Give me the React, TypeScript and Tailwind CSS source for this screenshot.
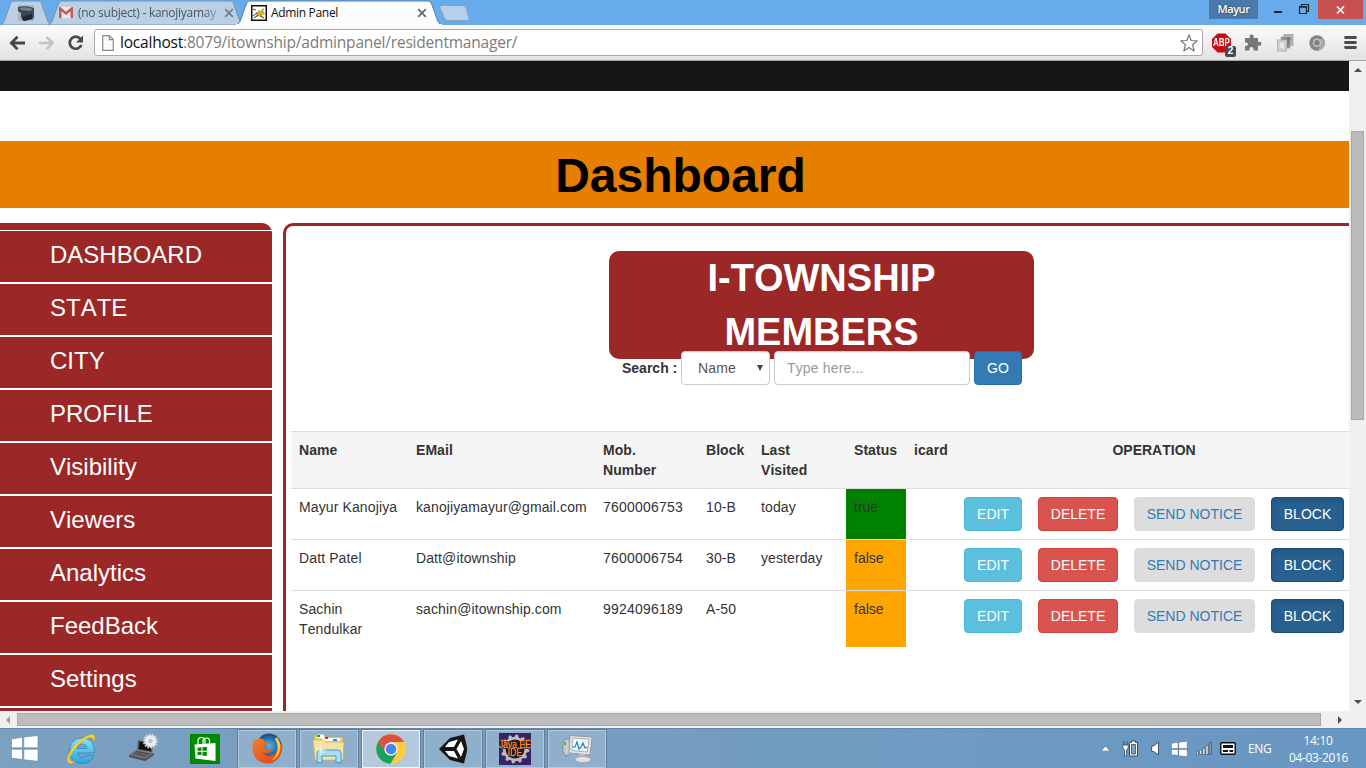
import type { ReactNode } from "react";

const UI = "font-['Open_Sans','Noto_Sans',sans-serif]";

function Tab({ width, active, children, className }: { width: number; active?: boolean; children: ReactNode; className: string }) {
  const w = width;
  return (
    <div className={`relative flex h-[25px] shrink-0 items-center ${className}`}>
      <svg className="absolute inset-0" width={w} height="25" viewBox={`0 0 ${w} 25`}>
        <path
          d={`M0 25 C3 24 4 22 5 19 L10 5 C11 2 12 1 14 1 L${w - 14} 1 C${w - 12} 1 ${w - 11} 2 ${w - 10} 5 L${w - 5} 19 C${w - 4} 22 ${w - 3} 24 ${w} 25 Z`}
          fill={active ? "#fcfcfc" : "#bbd0e5"}
          stroke={active ? "#5b7fa3" : "#7195b8"}
          strokeWidth="1"
        />
        {active && <path d={`M0 25 H${w}`} stroke="#fcfcfc" strokeWidth="2" />}
      </svg>
      {children}
    </div>
  );
}

function CloseX({ color }: { color: string }) {
  return (
    <svg className="relative" width="10" height="10" viewBox="0 0 10 10">
      <path d="M1.2 1.2 L8.8 8.8 M8.8 1.2 L1.2 8.8" stroke={color} strokeWidth="1.7" />
    </svg>
  );
}

function TabStrip() {
  return (
    <div className="flex h-[25px] bg-[#67abeb]">
      <Tab width={52} className="w-[52px]">
        <svg className="relative ml-[18px]" width="16" height="16" viewBox="0 0 16 16">
          <rect width="16" height="16" fill="#a9b8c4" />
          <path d="M0 2 Q8 0 16 3 V12 L15 14 L5 16 L3 12 V8 L0 6Z" fill="#3b4852" />
          <path d="M1 3 Q8 1 15 4 L12 6 L3 5Z" fill="#6d8597" />
          <path d="M4 12 L14 9 V14 L6 16Z" fill="#20272d" />
        </svg>
      </Tab>
      <Tab width={196} className="-ml-1 w-[196px]">
        <svg className="relative ml-[11px] shrink-0" width="14" height="11" viewBox="0 0 14 11">
          <path d="M0 0 H14 V11 H0Z" fill="#e3e9ee" />
          <path d="M1.2 11 V1.5 L7 6.4 L12.8 1.5 V11" fill="none" stroke="#cf5550" strokeWidth="2.4" />
        </svg>
        <span className={`${UI} relative ml-[5px] w-[142px] bg-gradient-to-r from-[#44505c] from-88% to-[#a5b9cc] bg-clip-text text-[12px] tracking-[-0.28px] whitespace-nowrap text-transparent`}>
          (no subject) - kanojiyamay
        </span>
        <span className="ml-[4px]"><CloseX color="#6e7f8e" /></span>
      </Tab>
      <Tab width={206} active className="-ml-2 w-[206px]">
        <svg className="relative ml-[15px] shrink-0" width="16" height="16" viewBox="0 0 16 16">
          <rect x=".75" y=".75" width="14.500" height="14.500" fill="#fff" stroke="#111" strokeWidth="1.500" />
          <path d="M4 8 L6 7 L8 5 L9 6 L13 2.500 L12.500 6 L14 9 L11 10 L13 13 L9 11 L3 13 L6 10Z" fill="#d5a43a" />
          <path d="M2 11 L6 8 M2 4 L5 5 M9 11 L13 13 M3 13 L7 10" stroke="#4b4434" strokeWidth="1" />
        </svg>
        <span className={`${UI} relative ml-[4px] w-[146px] text-[12px] tracking-[-0.32px] whitespace-nowrap text-[#111]`}>Admin Panel</span>
        <CloseX color="#666" />
      </Tab>
      <svg className="-ml-[5px]" width="34" height="25" viewBox="0 0 34 25">
        <path d="M4 5.5 H26 Q28 5.5 29 8 L32 18 Q32.500 20.500 30 20.500 H11 Q8.500 20.500 7.500 18 L3 8 Q2 5.500 4 5.500Z" fill="#b7d0ea" stroke="#80a5c8" />
      </svg>
      <div className="ml-auto flex items-start">
        <div className={`${UI} flex h-[19px] w-[49px] items-center justify-center bg-[#4a7aab] text-[11px] font-semibold tracking-[-0.4px] text-white [text-shadow:0_0_2px_#333]`}>Mayur</div>
        <svg width="60" height="19" viewBox="0 0 60 19">
          <path d="M16 12 H24" stroke="#1b2733" strokeWidth="2" />
          <path d="M41.500 6.500 H48.500 V13.500 H41.500Z M43.500 6 V4.500 H50.500 V11.500 H49" fill="none" stroke="#1b2733" strokeWidth="1.200" />
          <path d="M41 7 H49" stroke="#1b2733" strokeWidth="1.500" />
        </svg>
        <div className="mr-[3px] flex h-[19px] w-[45px] items-center justify-center bg-[#c75050]">
          <svg width="9" height="8" viewBox="0 0 9 8"><path d="M1 .5 L8 7.500 M8 .5 L1 7.500" stroke="#fff" strokeWidth="1.700" /></svg>
        </div>
      </div>
    </div>
  );
}

function Toolbar() {
  return (
    <div className="flex h-[36px] items-center border-b border-[#a5a5a5] bg-gradient-to-b from-[#fcfcfc] to-[#e2e2e2]">
      <svg className="ml-[9px] shrink-0" width="76" height="18" viewBox="0 0 76 18">
        <path d="M16 9 H3 M8.500 2.800 L2.300 9 L8.500 15.200" fill="none" stroke="#484848" strokeWidth="2.800" />
        <path d="M30 9 H43 M37.500 2.800 L43.700 9 L37.500 15.200" fill="none" stroke="#c3c3c3" strokeWidth="2.600" />
        <path d="M71.300 4.800 A6 6 0 1 0 72.300 11" fill="none" stroke="#484848" strokeWidth="2.700" />
        <path d="M74 1.500 V8.500 H67Z" fill="#484848" />
      </svg>
      <div className="ml-[9px] flex h-[27px] w-[1109px] shrink-0 items-center rounded-[3px] border border-[#a9a9a9] bg-white">
        <svg className="ml-[7px]" width="12" height="16" viewBox="0 0 12 16">
          <path d="M.7 .7 H7.500 L11.300 4.500 V15.300 H.7Z M7.300 .7 V4.700 H11.300" fill="#fafafa" stroke="#8a8a8a" strokeWidth="1.200" />
        </svg>
        <span className={`${UI} ml-[6px] text-[15.500px] tracking-[-0.205px] whitespace-nowrap text-[#7c7c7c]`}>
          <span className="text-[#111]">localhost</span>:8079/itownship/adminpanel/residentmanager/
        </span>
        <svg className="mr-[4px] ml-auto" width="18" height="18" viewBox="0 0 18 18">
          <path d="M9 .9 L11.200 6.500 L17.200 6.900 L12.600 10.700 L14.100 16.900 L9 13.500 L3.900 16.900 L5.400 10.700 L.8 6.900 L6.800 6.500Z" fill="#fff" stroke="#777" strokeWidth="1.200" strokeLinejoin="round" />
        </svg>
      </div>
      <div className="relative ml-[8px] h-[26px] w-[26px] shrink-0">
        <svg width="26" height="26" viewBox="0 0 26 26">
          <path d="M6.600 3.500 H14.400 L20 9.100 V16.900 L14.400 22.500 H6.600 L1 16.900 V9.100Z" fill="#c70d12" />
        </svg>
        <span className="absolute top-[8px] left-[2px] origin-left scale-x-[0.8] font-['Liberation_Sans',sans-serif] text-[10px] leading-[10px] font-bold text-white">ABP</span>
        <span className="absolute top-[16px] left-[14px] flex h-[11px] w-[11px] items-center justify-center rounded-[2px] bg-[#4a4a4a] font-['Liberation_Sans',sans-serif] text-[10px] leading-none font-bold text-white">2</span>
      </div>
      <svg className="ml-[7px] shrink-0" width="18" height="18" viewBox="0 0 18 18">
        <path d="M1 4 H6 Q4.500 .5 7.500 .5 Q10.500 .5 9.500 4 H14 V8 Q17.500 7 17.500 9.800 Q17.500 12.500 14 11.500 V16.500 H9.500 Q10 13 7.500 13 Q5 13 5.500 16.500 H1 V12 Q4 12 4 10 Q4 8 1 8.500Z" fill="#777" />
      </svg>
      <svg className="ml-[14px] shrink-0" width="18" height="18" viewBox="0 0 18 18">
        <rect x="8" y=".5" width="9" height="11" fill="#b0b0b0" stroke="#999" strokeWidth=".6" />
        <rect x="5" y="3" width="9" height="11" fill="#868686" stroke="#ababab" strokeWidth=".8" />
        <rect x="1.500" y="6" width="9" height="11" fill="#d0d0d0" stroke="#b2b2b2" />
        <path d="M4 9 H8 V14 H4Z" fill="#e6e6e6" /><path d="M11 5 H15 M13 3 V9" stroke="#777" strokeWidth="1.500" />
      </svg>
      <svg className="ml-[15px] shrink-0" width="16" height="16" viewBox="0 0 16 16">
        <circle cx="8" cy="8" r="7.700" fill="#858585" />
        <path d="M8 4 H15 A7.700 7.700 0 0 1 9 15.500 L11.500 10Z" fill="#a9a9a9" />
        <circle cx="8" cy="7.800" r="4.300" fill="#c5c5c5" /><circle cx="8" cy="7.800" r="2.700" fill="#808080" />
      </svg>
      <svg className="ml-[19px] shrink-0" width="13" height="13" viewBox="0 0 13 13">
        <path d="M1.500 1.500 H11.500 M1.500 6.500 H11.500 M1.500 11.500 H11.500" stroke="#4d4d4d" strokeWidth="2.800" strokeLinecap="round" />
      </svg>
    </div>
  );
}

const MENU = ["DASHBOARD", "STATE", "CITY", "PROFILE", "Visibility", "Viewers", "Analytics", "FeedBack", "Settings"];

type Member = { name: string; email: string; mobile: string; block: string; visited: string; status: boolean };

const MEMBERS: Member[] = [
  { name: "Mayur Kanojiya", email: "kanojiyamayur@gmail.com", mobile: "7600006753", block: "10-B", visited: "today", status: true },
  { name: "Datt Patel", email: "Datt@itownship", mobile: "7600006754", block: "30-B", visited: "yesterday", status: false },
  { name: "Sachin Tendulkar", email: "sachin@itownship.com", mobile: "9924096189", block: "A-50", visited: "", status: false },
];

const BTN = "h-[34px] w-full rounded-[4px] border text-[14px] leading-[20px] whitespace-nowrap";

function MembersTable() {
  return (
    <table className="mt-[46px] ml-[5px] w-[1061px] shrink-0 table-fixed border-collapse text-left text-[14px] leading-[20px] text-[#333]">
      <colgroup>
        <col className="w-[117px]" /><col className="w-[187px]" /><col className="w-[103px]" /><col className="w-[55px]" />
        <col className="w-[93px]" /><col className="w-[60px]" /><col className="w-[50px]" /><col className="w-[74px]" />
        <col className="w-[96px]" /><col className="w-[137px]" /><col className="w-[89px]" />
      </colgroup>
      <thead>
        <tr className="h-[57px] bg-[#f5f5f5] align-top tracking-[0.06px] shadow-[inset_0_1px_0_#ddd] [&>th]:p-2 [&>th]:pt-[9px] [&>th]:font-bold">
          <th>Name</th><th>EMail</th><th>Mob.<br />Number</th><th className="whitespace-nowrap">Block</th><th>Last<br />Visited</th>
          <th className="whitespace-nowrap">Status</th><th>icard</th><th colSpan={4} className="text-center tracking-normal">OPERATION</th>
        </tr>
      </thead>
      <tbody>
        {MEMBERS.map((m) => (
          <tr key={m.email} className="h-[51px] align-top shadow-[inset_0_1px_0_#ddd] [&>td]:p-2 [&>td]:pt-[9px]">
            <td className="tracking-[0.120px]">{m.name}</td>
            <td className="tracking-[0.110px]">{m.email}</td>
            <td className="tracking-[0.210px]">{m.mobile}</td>
            <td className="tracking-[0.120px]">{m.block}</td>
            <td className="tracking-[0.100px]">{m.visited}</td>
            <td className={m.status ? "bg-[#008000] bg-clip-content !p-0 !pt-px" : "bg-[#ffa500] bg-clip-content !p-0 !pt-px"}>
              <div className="p-2">{String(m.status)}</div>
            </td>
            <td />
            <td><button className={`${BTN} border-[#46b8da] bg-[#5bc0de] text-white`}>EDIT</button></td>
            <td><button className={`${BTN} border-[#d43f3a] bg-[#d9534f] text-white`}>DELETE</button></td>
            <td><button className={`${BTN} border-[#ddd] bg-[#ddd] text-[#337ab7]`}>SEND NOTICE</button></td>
            <td><button className={`${BTN} border-[#204d74] bg-[#286090] text-white shadow-[inset_0_3px_5px_rgba(0,0,0,0.125)]`}>BLOCK</button></td>
          </tr>
        ))}
      </tbody>
    </table>
  );
}

function Page() {
  return (
    <div className="flex h-[650px] w-[1349px] flex-col overflow-hidden bg-white font-['Liberation_Sans',Arial,sans-serif] [font-kerning:none]">
      <div className="h-[30px] shrink-0 bg-[#161616]" />
      <h1 className="mt-[50px] h-[67px] w-[1349px] shrink-0 bg-[#e67e00] pl-[12px] text-center text-[48px] leading-[70px] font-bold text-black">Dashboard</h1>
      <div className="mt-[15px] flex h-[488px] shrink-0">
        <nav className="w-[272px] shrink-0 overflow-hidden rounded-tr-[10px] bg-[#9b2727] pt-[7px] text-[24px] text-white">
          <ul className="border-t border-white">
            {MENU.map((m) => (
              <li key={m} className="h-[53px] border-b-2 border-white pl-[50px] leading-[48px]">{m}</li>
            ))}
          </ul>
        </nav>
        <main className="-mr-4 ml-[11px] flex w-[1082px] shrink-0 flex-col rounded-tl-[10px] border-t-[3px] border-l-[3px] border-[#9b2727]">
          <h2 className="mt-[25px] ml-[323px] h-[108px] w-[425px] shrink-0 rounded-[10px] bg-[#9b2727] px-8 text-center text-[38px] leading-[54px] font-bold text-white">
            I-TOWNSHIP<br />MEMBERS
          </h2>
          <form className="-mt-[8px] ml-[336px] flex h-[34px] shrink-0 items-center text-[14px]">
            <label className="w-[59px] text-[14px] leading-[32px] font-bold whitespace-nowrap text-[#333]">Search :</label>
            <div className="flex h-[34px] w-[89px] items-center justify-between rounded-[4px] border border-[#ccc] bg-white pr-[6px] pl-[16px] text-[#555] shadow-[inset_0_1px_1px_rgba(0,0,0,0.075)]">
              <span className="tracking-[0.15px]">Name</span>
              <svg width="6" height="6" viewBox="0 0 6 6"><path d="M0 0 H6 L3 6Z" fill="#444" /></svg>
            </div>
            <input placeholder="Type here..." className="ml-[4px] h-[34px] w-[196px] rounded-[4px] border border-[#ccc] bg-white px-[12px] text-[14px] tracking-[0.15px] shadow-[inset_0_1px_1px_rgba(0,0,0,0.075)] placeholder:text-[#999]" />
            <button type="button" className="ml-[4px] h-[34px] w-[48px] rounded-[4px] border border-[#2e6da4] bg-[#337ab7] text-[14px] text-white">GO</button>
          </form>
          <MembersTable />
        </main>
      </div>
    </div>
  );
}

function VScroll() {
  return (
    <div className="flex h-[650px] w-[17px] flex-col items-center bg-[#f0f0f0]">
      <svg className="mt-[7px]" width="8" height="4" viewBox="0 0 8 4"><path d="M0 4 L4 0 L8 4Z" fill="#505050" /></svg>
      <div className="mt-[59px] h-[289px] w-[13px] border border-[#a8a8a8] bg-[#bcbcbc]" />
      <svg className="mt-auto mb-[7px]" width="8" height="4" viewBox="0 0 8 4"><path d="M0 0 L4 4 L8 0Z" fill="#505050" /></svg>
    </div>
  );
}

function HScroll() {
  return (
    <div className="flex h-[17px] items-center bg-[#f0f0f0]">
      <svg className="ml-[6px]" width="4" height="8" viewBox="0 0 4 8"><path d="M4 0 L0 4 L4 8Z" fill="#a0a0a0" /></svg>
      <div className="ml-[7px] h-[13px] w-[1304px] border border-[#a8a8a8] bg-[#bcbcbc]" />
      <svg className="ml-[17px]" width="4" height="8" viewBox="0 0 4 8"><path d="M0 0 L4 4 L0 8Z" fill="#505050" /></svg>
    </div>
  );
}

function Slot({ children, active }: { children: ReactNode; active?: boolean }) {
  return (
    <div className={`flex h-[40px] w-[60px] items-center justify-center border outline outline-[#5d7f9f] -outline-offset-1 ${active ? "border-[#5d7f9f] bg-[#b5c9dc] shadow-[inset_0_0_0_1px_#f4f8fc]" : "border-[#5d7f9f] bg-[#8fafcb] shadow-[inset_0_0_0_1px_#b3c9dc]"}`}>
      {children}
    </div>
  );
}

function WinLogo({ w, h, stroke }: { w: number; h: number; stroke?: string }) {
  return (
    <svg width={w} height={h} viewBox="0 0 28 27">
      <path d="M.5 4 L11.500 2.200 V12.800 H.5Z M12.800 2 L27 .5 V12.800 H12.800Z M.5 14.200 H11.500 V24.600 L.5 23Z M12.800 14.200 H27 V26.300 L12.800 24.800Z" fill="#fff" stroke={stroke ?? "#6185a8"} strokeWidth=".6" />
    </svg>
  );
}

function gearPath(cx: number, cy: number, r1: number, r2: number, n: number) {
  const pts: string[] = [];
  for (let i = 0; i < n * 4; i++) {
    const a = ((i + 0.5) / (n * 4)) * Math.PI * 2;
    const r = i % 4 < 2 ? r2 : r1;
    pts.push(`${(cx + r * Math.cos(a)).toFixed(2)} ${(cy + r * Math.sin(a)).toFixed(2)}`);
  }
  return `M${pts.join("L")}Z`;
}

function Taskbar() {
  return (
    <div className="flex h-[40px] items-center border-t border-[#6487a9] bg-[linear-gradient(90deg,#7ba0c0,#759dc0_45%,#6897c3)]">
      <div className="ml-[11px] w-[28px]"><WinLogo w={28} h={27} /></div>
      <svg className="ml-[26px]" width="32" height="32" viewBox="0 0 32 32">
        <defs><linearGradient id="ie" x1="0" y1="0" x2="0" y2="1"><stop offset="0" stopColor="#8be2fa" /><stop offset="1" stopColor="#28a4dc" /></linearGradient></defs>
        <path d="M29.500 20 H12.500 Q13 24.500 17.500 24.500 Q20.500 24.500 22 22.500 H29 Q26 30.500 17 30.500 Q5 30 4.500 18 Q5 5.500 17 5 Q30 5.500 29.500 20Z M12.500 15.500 H22 Q21.500 11 17.200 11 Q13 11 12.500 15.500Z" fill="url(#ie)" fillRule="evenodd" stroke="#2583b5" strokeWidth=".7" />
        <path d="M5 30.500 C-1 29 4 18 12 10 C19 3 28 -.5 29.500 3 C30.300 5 29 8 28.500 9 C29 4 26 3 20 6.500 C11 12 2 25 5.500 28 C7 29 9.500 28 10 27.700 C8.500 29.500 6.500 30.800 5 30.500Z" fill="#fcd52d" stroke="#dba514" strokeWidth=".5" />
      </svg>
      <svg className="ml-[30px]" width="32" height="32" viewBox="0 0 32 32">
        <path d="M11 7 L25 9 L25.500 20 L10 17Z" fill="#4a4f52" stroke="#8b9094" strokeWidth=".7" /><path d="M12.500 9 L23.500 10.500 L24 18 L12 16Z" fill="#111" />
        <path d="M9 17 L26 20 L18 26 L2 22Z" fill="#6a6a6a" stroke="#858585" strokeWidth=".7" /><path d="M9 18.500 L23 21.300 M7 20 L19 23" stroke="#444" strokeWidth="1" />
        <path d="M2 22 L18 26 V28 L2 24Z M18 26 L27 20 V22 L18 28Z" fill="#4a4a4a" />
        <path d={gearPath(23.500, 8, 5.800, 7.600, 14)} fill="#e9edf0" stroke="#a7b0b8" strokeWidth=".6" /><circle cx="23.500" cy="8" r="2.200" fill="#b9c2ca" />
      </svg>
      <svg className="ml-[31px]" width="30" height="30" viewBox="0 0 30 30">
        <rect width="30" height="30" fill="#008a00" />
        <path d="M4.500 10.500 L25.500 9 V27 L5.500 24.500Z" fill="#fff" /><path d="M8 11 V7 Q8 3.500 11.500 3.500 Q14.500 3.500 15 6 V10 M13 10 V6.500 Q14 4 17 4 Q19.500 4 19.500 7 V10" fill="none" stroke="#fff" strokeWidth="1.200" />
        <path d="M7.500 13.800 L11.500 13.300 V16.800 H7.500Z M12.500 13.200 L16.800 12.700 V16.800 H12.500Z M7.500 17.800 H11.500 V21.300 L7.500 20.800Z M12.500 17.800 H16.800 V22 L12.500 21.500Z" fill="#008a00" />
      </svg>
      <div className="ml-[17px] flex gap-[2px]">
        <Slot>
          <svg width="31" height="31" viewBox="0 0 31 31">
            <defs><radialGradient id="ffb"><stop offset="0" stopColor="#4db8e8" /><stop offset="1" stopColor="#124a8c" /></radialGradient>
              <linearGradient id="fff" x1="0" y1="0" x2="1" y2="1"><stop offset="0" stopColor="#f4802b" /><stop offset="1" stopColor="#df3f16" /></linearGradient></defs>
            <circle cx="17" cy="13" r="12.500" fill="url(#ffb)" />
            <path d="M2 5 C2 7 3 8 3 8 C5 5 9 5 11 6 C11 8 14 9 16 9 C16 12 12 12 12 14 C12 17 17 17 20 15 C19 20 14 22 11 19 C12 24 22 25 25 17 C26 13 25 9 23 6 C28 8 29 12 29 12 L30 9 C32 20 26 30.500 15 30.500 C6 30 0 23 .5 15 C.5 11 1 8 2 5Z" fill="url(#fff)" />
            <path d="M25 4 C31 12 29 24 19 28 C26 22 28 14 23 6Z" fill="#ffc83d" />
          </svg>
        </Slot>
        <Slot>
          <svg width="34" height="31" viewBox="0 0 34 31">
            <path d="M2 2 H12 L14 4 H31 V10 H2Z" fill="#e9cf79" stroke="#c2a145" strokeWidth=".7" />
            <path d="M5 1.500 H12 V5 H5Z" fill="#fff" /><rect x="5" y="2" width="3" height="2" fill="#1fa827" />
            <path d="M10 5 H28 V8 H10Z" fill="#fff" /><rect x="13" y="4" width="3" height="2" fill="#d22b2b" /><rect x="21" y="6" width="4" height="2" fill="#2a8fd8" />
            <path d="M1 7 H12 L14 9 H32 L31 27 H3Z" fill="#f5e3a0" stroke="#cdae55" strokeWidth=".7" />
            <path d="M5 29.500 V20 Q5 17 8 17 H26 Q29 17 29 20 V29.500 H24 V23 H10 V29.500Z" fill="#a8ddf4" stroke="#4798cf" />
            <path d="M9 12 V22 M4 17 H14 M6 14 L12 20" stroke="#fff" strokeWidth=".8" />
          </svg>
        </Slot>
        <Slot active>
          <svg width="30" height="30" viewBox="0 0 30 30">
            <circle cx="15" cy="15" r="14.800" fill="#ffcd40" />
            <path d="M2.200 7.600 A14.800 14.800 0 0 0 14.500 29.800 L21.200 18.500 L15 15 H8Z" fill="#1aa05f" />
            <path d="M2.200 7.600 A14.800 14.800 0 0 1 28 8 H15 L9 18Z" fill="#dd5144" />
            <circle cx="15" cy="15" r="6.700" fill="#f3f3f3" /><circle cx="15" cy="15" r="5.300" fill="#4587f3" />
          </svg>
        </Slot>
        <Slot>
          <svg width="30" height="30" viewBox="0 0 30 30">
            <path d="M1 15 L12 4 L26 .5 L29 13 V17 L26 29.500 L12 26 Z" fill="#151515" />
            <path d="M11 8 L20 5.500 L16 13 H7Z M7 17 H16 L20 24.500 L11 22Z M23 7 L26 15 L23 23 L18.500 15Z" fill="#fff" />
          </svg>
        </Slot>
        <Slot>
          <div className="relative h-[32px] w-[32px] bg-[#3a2064]">
            <svg width="32" height="32" viewBox="0 0 32 32">
              <path d={gearPath(16, 16, 12, 14.500, 12)} fill="#b9bcbd" /><circle cx="16" cy="16" r="9.500" fill="#201a28" />
              <path d="M1 8 H31 V16 H23 V24 H9 V16 H1Z" fill="#201a28" opacity=".75" />
            </svg>
            <span className="absolute top-[7px] -left-[4px] w-[40px] scale-x-[0.82] text-center font-['Liberation_Sans',sans-serif] text-[10.500px] leading-[8px] whitespace-nowrap text-[#ff8a1f] [-webkit-text-stroke:0.3px_#ff8a1f]">Java EE<br />IDE</span>
          </div>
        </Slot>
        <Slot>
          <svg width="32" height="30" viewBox="0 0 32 30">
            <path d="M2 7 L8 4 L9 20 L5 22 L2 18Z" fill="#c9cdd0" stroke="#777" strokeWidth=".7" /><rect x="3" y="8" width="2" height="3" fill="#31c531" />
            <path d="M9 1.500 L31 3 L29 21 L8 19Z" fill="#e3e6e8" stroke="#999" /><path d="M11.500 4 L28 5 L26.500 18 L11 16.500Z" fill="#edf7fc" stroke="#a3b2bc" />
            <path d="M11.500 13 L14 13 L16 8 L18 15 L20 13 L22 9 L24 14 L26.500 13" fill="none" stroke="#2582b7" strokeWidth="1.200" />
            <path d="M18 20 H24 V25 H18Z" fill="#bbb" /><ellipse cx="22" cy="25.500" rx="8" ry="3" fill="#dfe2e4" stroke="#999" strokeWidth=".6" />
          </svg>
        </Slot>
      </div>
      <div className={`${UI} ml-auto flex items-center text-[12px] text-white`}>
        <svg width="9" height="5" viewBox="0 0 9 5"><path d="M0 5 L4.500 0 L9 5Z" fill="#fff" stroke="#3d556e" strokeWidth=".5" /></svg>
        <svg className="ml-[12px]" width="17" height="17" viewBox="0 0 17 17">
          <path d="M9.500 2.500 V1 H13.500 V2.500 H15.500 V16 H7.500 V2.500Z" fill="#fff" stroke="#334a60" /><path d="M9.500 4.500 H13.500 V14 H9.500Z" fill="#80a2c2" stroke="#334a60" strokeWidth=".8" />
          <path d="M2 1 V5 M5 1 V5 M.8 5 H6.200 V8 L4.500 10 V16 H2.500 V10 L.8 8Z" fill="#fff" stroke="#334a60" strokeWidth=".8" />
        </svg>
        <svg className="ml-[12px]" width="9" height="15" viewBox="0 0 9 15"><path d="M.7 5 H2.700 L7.500 1 V14 L2.700 10.500 H.7Z" fill="#fff" stroke="#334a60" strokeWidth=".9" /></svg>
        <div className="ml-[11px]"><WinLogo w={17} h={16} stroke="#334a60" /></div>
        <svg className="ml-[8px]" width="16" height="13" viewBox="0 0 16 13">
          <path d="M.5 10 H2.500 V12.500 H.5Z M3.700 8 H5.700 V12.500 H3.700Z M6.900 6 H8.900 V12.500 H6.900Z M10 3.500 H12 V12.500 H10Z" fill="#fff" stroke="#334a60" strokeWidth=".6" /><path d="M13.200 .5 H15.500 V12.500 H13.200Z" fill="#8b9ba9" stroke="#334a60" strokeWidth=".6" />
        </svg>
        <svg className="ml-[8px]" width="16" height="13" viewBox="0 0 16 13">
          <rect x=".8" y=".8" width="14.400" height="11.400" rx="1" fill="#fff" stroke="#111" strokeWidth="1.400" /><path d="M3 3 H13 V6 H3Z M3 8 H8 V10 H3Z M9.500 8 H13 V10 H9.500Z" fill="#111" />
        </svg>
        <span className="ml-[12px] w-[24px] tracking-[-0.400px]">ENG</span>
        <div className="mr-[19px] ml-[17px] w-[58px] text-center leading-[17px] tracking-[-0.350px] whitespace-nowrap">14:10<br />04-03-2016</div>
      </div>
    </div>
  );
}

export default function App() {
  return (
    <div className="flex h-[768px] w-[1366px] flex-col overflow-hidden bg-white">
      <TabStrip />
      <Toolbar />
      <div className="flex h-[650px]">
        <Page />
        <VScroll />
      </div>
      <HScroll />
      <Taskbar />
    </div>
  );
}
